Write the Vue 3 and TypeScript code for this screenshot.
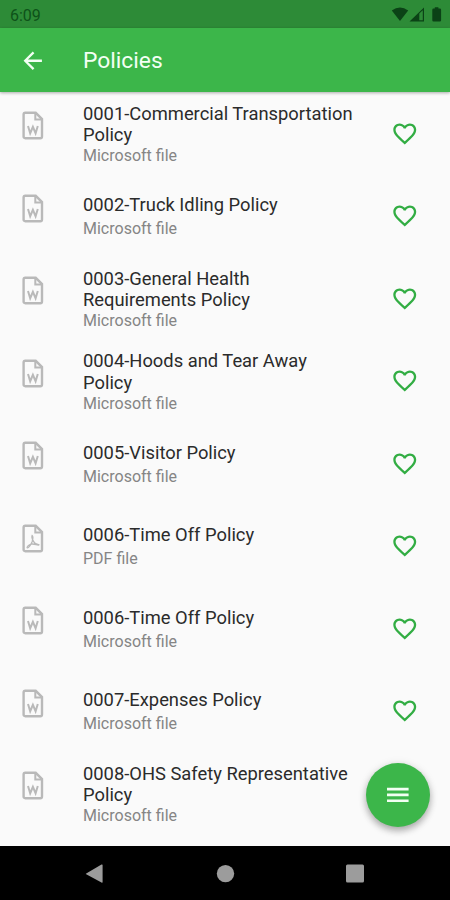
<script setup lang="ts">
interface Policy {
  title: string
  kind: 'word' | 'pdf'
}

const policies: Policy[] = [
  { title: '0001-Commercial Transportation Policy', kind: 'word' },
  { title: '0002-Truck Idling Policy', kind: 'word' },
  { title: '0003-General Health Requirements Policy', kind: 'word' },
  { title: '0004-Hoods and Tear Away Policy', kind: 'word' },
  { title: '0005-Visitor Policy', kind: 'word' },
  { title: '0006-Time Off Policy', kind: 'pdf' },
  { title: '0006-Time Off Policy', kind: 'word' },
  { title: '0007-Expenses Policy', kind: 'word' },
  { title: '0008-OHS Safety Representative Policy', kind: 'word' },
]
const twoLine = (p: Policy): boolean => p.title.length > 28
</script>

<template>
  <div class="screen">
    <div class="status">
      <span class="time">6:09</span>
      <svg class="indicators" width="52" height="16" viewBox="0 0 52 16">
        <path d="M0.8 3.6Q9 -2.6 17.2 3.6L9 14Z" />
        <path fill-rule="evenodd" d="M18.5 14.5L33 .5v14ZM28.3 6.6v6.7h3.5V3.3Z" />
        <path d="M43.8 .3h3.6v1.2h1.5q1.2 0 1.2 1.2v10.6q0 1.2-1.2 1.2h-6.4q-1.2 0-1.2-1.2v-10.6q0-1.2 1.2-1.2h1.3Z" />
      </svg>
    </div>
    <header class="bar">
      <svg class="back" width="27.5" height="27.5" viewBox="0 0 24 24">
        <path d="M20 11H7.83l5.59-5.59L12 4l-8 8 8 8 1.41-1.41L7.83 13H20z" />
      </svg>
      <h1>Policies</h1>
    </header>
    <main class="list">
      <div v-for="(p, i) in policies" :key="i" class="row">
        <svg class="file" width="22" height="29" viewBox="0 0 22 29">
          <path class="outline" d="M3.3 1.8H13.7L20 8.1V25.5Q20 27.2 18.3 27.2H3.3Q1.6 27.2 1.6 25.5V3.5Q1.6 1.8 3.3 1.8Z" />
          <path class="fold" d="M13.3 2V8.4H20" />
          <path v-if="p.kind === 'word'" class="mark" d="M6 15L8.2 22.2L10.9 15.8L13.6 22.2L15.8 15" />
          <path v-else class="curl" d="M10.1 11.5C9.3 12.8 10.5 17 13.2 19.4C15 20.7 17.5 20 16.8 21C15.5 22 12.5 19.2 9.1 20.2C6 21.2 4.6 23.2 5.2 23.8C6.3 24.5 9 20.7 10.1 17.7C11 15 11 12.2 10.1 11.5Z" />
        </svg>
        <div class="copy" :class="{ tall: twoLine(p) }">
          <div class="title">{{ p.title }}</div>
          <div class="kind">{{ p.kind === 'pdf' ? 'PDF file' : 'Microsoft file' }}</div>
        </div>
        <svg class="heart" width="27.5" height="27.5" viewBox="0 0 24 24">
          <path d="M16.5 3c-1.74 0-3.41.81-4.5 2.09C10.91 3.81 9.24 3 7.5 3 4.42 3 2 5.42 2 8.5c0 3.78 3.4 6.86 8.55 11.54L12 21.35l1.45-1.32C18.6 15.36 22 12.28 22 8.5 22 5.42 19.58 3 16.5 3zm-4.4 15.55l-.1.1-.1-.1C7.14 14.24 4 11.39 4 8.5 4 6.5 5.5 5 7.5 5c1.54 0 3.04.99 3.57 2.36h1.87C13.46 5.99 14.96 5 16.5 5c2 0 3.5 1.5 3.5 3.5 0 2.89-3.14 5.74-7.9 10.05z" />
        </svg>
      </div>
    </main>
    <button class="fab" type="button" aria-label="Menu">
      <svg width="22" height="16" viewBox="0 0 22 16">
        <path d="M0 .8h21.6v2.7H0zM0 6.6h21.6v2.7H0zM0 12.4h21.6v2.7H0z" />
      </svg>
    </button>
    <nav class="nav">
      <svg width="20" height="20" viewBox="0 0 20 20"><path d="M1.2 9.4L16.5.6Q17.6 0 17.6 1.2V18Q17.6 19.2 16.5 18.6L1.2 10.3Q.3 9.8 1.2 9.4Z" /></svg>
      <svg width="20" height="20" viewBox="0 0 20 20"><circle cx="10.5" cy="9.6" r="8.7" /></svg>
      <svg width="20" height="20" viewBox="0 0 20 20"><rect x="1" y=".6" width="18" height="18" rx="1.5" /></svg>
    </nav>
  </div>
</template>

<style>
body { margin: 0; }
</style>

<style scoped>
.screen {
  position: relative;
  display: flex;
  flex-direction: column;
  width: 450px;
  height: 900px;
  overflow: hidden;
  background: #fafafa;
  font-family: Roboto, sans-serif;
}
.status {
  display: flex;
  flex: none;
  justify-content: space-between;
  box-sizing: border-box;
  height: 28px;
  padding: 7px 7px 0 10px;
  background: #2d8b37;
  color: #0d5219;
}
.time { font-size: 16px; line-height: 17px; }
.indicators { fill: #0b4216; }
.bar {
  position: relative;
  z-index: 1;
  display: flex;
  flex: none;
  align-items: center;
  box-sizing: border-box;
  height: 64px;
  padding-left: 19px;
  background: #3cb64a;
  box-shadow: 0 1px 3px rgba(0, 0, 0, .32);
}
.back { margin-top: 1px; fill: #f3fff4; }
h1 {
  margin: 2px 0 0 36.5px;
  color: #f3fff4;
  font-size: 22.8px;
  font-weight: 400;
  line-height: 28px;
}
.list { flex: none; height: 754px; overflow: hidden; }
.row {
  display: flex;
  box-sizing: border-box;
  height: 82.5px;
  padding-left: 21.5px;
}
.file { flex: none; margin-top: 19.2px; fill: none; stroke: #b9b9b9; }
.outline { stroke-width: 2.4; }
.fold { stroke-width: 2; }
.mark { stroke-width: 2; }
.curl { stroke-width: 1.3; }
.copy { flex: none; width: 273px; margin-left: 39.5px; padding-top: 19.8px; }
.title { color: #2b2b2b; font-size: 18.35px; line-height: 21.5px; }
.kind { margin-top: 3.5px; color: #858585; font-size: 16px; line-height: 19px; }
.tall { padding-top: 10.8px; }
.tall .kind { margin-top: .3px; }
.heart { flex: none; margin: 27.6px 0 0 34.7px; fill: #32ad43; }
.fab {
  position: absolute;
  top: 763px;
  left: 366px;
  display: flex;
  align-items: center;
  justify-content: center;
  width: 64px;
  height: 64px;
  padding: 0;
  border: 0;
  border-radius: 50%;
  background: #3cb64a;
  box-shadow: 0 4px 7px rgba(0, 0, 0, .28), 0 1px 10px rgba(0, 0, 0, .1);
}
.fab svg { fill: #f1fff2; }
.nav {
  position: relative;
  display: flex;
  flex: 1;
  gap: 110px;
  justify-content: center;
  align-items: flex-start;
  box-sizing: border-box;
  padding-top: 17.5px;
  background: #000;
}
.nav svg { fill: #9c9c9c; }
</style>
